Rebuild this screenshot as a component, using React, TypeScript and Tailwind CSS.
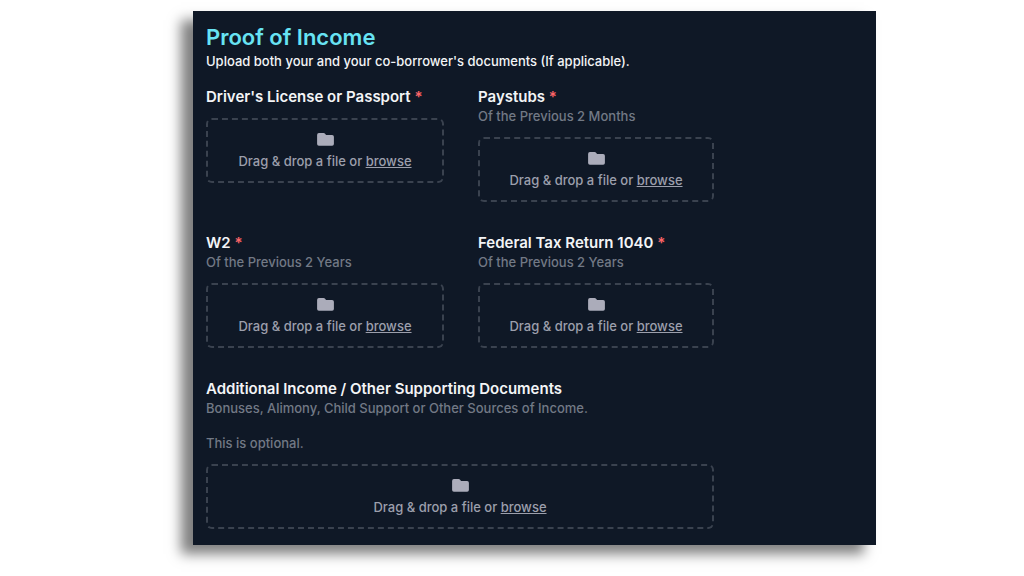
import React from 'react';

interface UploadFieldProps {
  id: string;
  label: string;
  hints?: string[];
  required?: boolean;
  className?: string;
}

const FolderIcon: React.FC = () => (
  <svg viewBox="0 0 20 20" fill="currentColor" className="size-[21px] text-[#abacba]" aria-hidden="true">
    <path d="M2 5.6A1.7 1.7 0 013.7 3.9h4.5c.5 0 .9.2 1.2.5l1.1 1.2h5.8A1.7 1.7 0 0118 7.3v7A1.7 1.7 0 0116.3 16H3.7A1.7 1.7 0 012 14.3z" />
  </svg>
);

const UploadField: React.FC<UploadFieldProps> = ({ id, label, hints = [], required, className = '' }) => (
  <div className={className}>
    <label htmlFor={id} className="block text-[15px] leading-[21px] font-semibold text-gray-100">
      {label}
      {required && <span className="text-red-400"> *</span>}
    </label>
    {hints.length > 0 && (
      <div className="flex flex-col gap-[17px] pb-px text-[13px] leading-[18px] font-medium text-[#727985]">
        {hints.map((hint) => (
          <p key={hint}>{hint}</p>
        ))}
      </div>
    )}

    {/* Drop zone: the native input is hidden, the label takes the click */}
    <label
      htmlFor={id}
      className="relative mt-[11px] flex cursor-pointer flex-col items-center rounded-md border-2 border-dashed border-[#3a424f] py-[9px] text-[13px] leading-[22px] font-medium text-[#9c9fac]"
    >
      <input id={id} type="file" required={required} className="sr-only" />
      <FolderIcon />
      <span>
        Drag &amp; drop a file or <span className="underline">browse</span>
      </span>
    </label>
  </div>
);

const App: React.FC = () => (
  <main className="bg-white pt-[11px] pr-[148px] pb-8 pl-[193px] font-['Inter',sans-serif]">
    <section className="bg-[#0f1826] px-[13px] pt-3 pb-4 shadow-[-12px_9px_12px_rgba(0,0,0,0.5)]">
      <h1 className="text-[22px] leading-7 font-semibold text-[#67e3f3]">Proof of Income</h1>
      <p className="text-[13px] leading-5 font-medium text-gray-100">
        Upload both your and your co-borrower's documents (If applicable).
      </p>

      <form className="mt-[15px] grid max-w-[508px] grid-cols-[238fr_236fr] gap-x-[34px] gap-y-[30px]">
        <UploadField id="license" label="Driver's License or Passport" required />
        <UploadField id="paystubs" label="Paystubs" hints={['Of the Previous 2 Months']} required />
        <UploadField id="w2" label="W2" hints={['Of the Previous 2 Years']} required />
        <UploadField id="tax-return" label="Federal Tax Return 1040" hints={['Of the Previous 2 Years']} required />
        <UploadField
          id="additional"
          label="Additional Income / Other Supporting Documents"
          hints={['Bonuses, Alimony, Child Support or Other Sources of Income.', 'This is optional.']}
          className="col-span-2"
        />
      </form>
    </section>
  </main>
);

export default App;
